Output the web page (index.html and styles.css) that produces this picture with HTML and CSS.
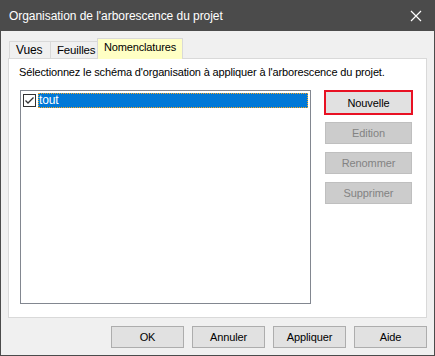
FILE: index.html
```html
<!DOCTYPE html>
<html lang="fr">
<head>
    <meta charset="UTF-8">
    <title>Organisation de l'arborescence du projet</title>
    <link rel="stylesheet" href="styles.css">
</head>
<body>
    <div class="window">
        <div class="titlebar">
            <span class="title">Organisation de l'arborescence du projet</span>
            <svg class="close" width="12" height="12" viewBox="0 0 12 12">
                <path d="M1 1 L11 11 M11 1 L1 11" stroke="#fff" stroke-width="1.2" fill="none"/>
            </svg>
        </div>

        <div class="content">
            <ul class="tabs">
                <li class="tab tab-vues">Vues</li>
                <li class="tab tab-feuilles">Feuilles</li>
                <li class="tab tab-nomenclatures active">Nomenclatures</li>
            </ul>

            <div class="panel">
                <p class="hint">Sélectionnez le schéma d'organisation à appliquer à l'arborescence du projet.</p>
                <div class="panel-body">
                    <div class="listbox">
                        <div class="list-item">
                            <span class="checkbox">
                                <svg width="13" height="13" viewBox="0 0 13 13">
                                    <path d="M2.5 6.5 L5 9 L10.5 3.5" stroke="#333" stroke-width="1.3" fill="none"/>
                                </svg>
                            </span>
                            <span class="item-label">tout</span>
                        </div>
                    </div>
                    <div class="side-buttons">
                        <button class="btn focus">Nouvelle</button>
                        <button class="btn" disabled>Edition</button>
                        <button class="btn" disabled>Renommer</button>
                        <button class="btn" disabled>Supprimer</button>
                    </div>
                </div>
            </div>

            <div class="footer">
                <button class="btn footer-btn">OK</button>
                <button class="btn footer-btn">Annuler</button>
                <button class="btn footer-btn">Appliquer</button>
                <button class="btn footer-btn">Aide</button>
            </div>
        </div>
    </div>
</body>
</html>
```

FILE: styles.css
```css
* {
    margin: 0;
    padding: 0;
    box-sizing: border-box;
}

body {
    font-family: 'Liberation Sans', Arial, sans-serif;
    font-size: 11px;
    letter-spacing: -0.15px;
    color: #000;
    background: #f0f0f0;
}

.window {
    width: 435px;
    height: 356px;
    border: 1px solid #4b4b4b;
    border-top: none;
    display: flex;
    flex-direction: column;
    background: #f0f0f0;
}

/* Title bar */
.titlebar {
    height: 31px;
    background: #4b4b4b;
    display: flex;
    align-items: center;
    justify-content: space-between;
    padding: 0 10px 0 9px;
    margin: 0 -1px;
}

.title {
    color: #fff;
    font-size: 12px;
    letter-spacing: -0.05px;
}

.close {
    margin-right: 3px;
}

/* Body */
.content {
    flex: 1;
    padding: 7px 7px 0 7px;
    display: flex;
    flex-direction: column;
}

.tabs {
    display: flex;
    list-style: none;
    align-items: flex-end;
    height: 20px;
    padding-left: 1px;
}

.tab {
    height: 17px;
    padding-left: 6px;
    border: 1px solid #d9d9d9;
    border-bottom: none;
    border-right: none;
    line-height: 16px;
    background: #f0f0f0;
}

.tab-vues {
    width: 41px;
    font-size: 12px;
}

.tab-feuilles {
    width: 47px;
    font-size: 11.5px;
}

.tab-nomenclatures {
    width: 86px;
}

.tab.active {
    height: 21px;
    margin-bottom: -1px;
    border-right: 1px solid #d9d9d9;
    background: #ffffc4;
    line-height: 16px;
    position: relative;
    z-index: 1;
}

.panel {
    height: 260px;
    border: 1px solid #d9d9d9;
    background: #fff;
    padding: 6px 11px 13px 10px;
    display: flex;
    flex-direction: column;
}

.hint {
    white-space: nowrap;
    line-height: 14px;
    margin-bottom: 11px;
}

.panel-body {
    flex: 1;
    display: flex;
    gap: 13px;
}

.listbox {
    width: 291px;
    margin-left: 1px;
    border: 1px solid #828790;
    background: #fff;
    padding: 2px;
}

.list-item {
    display: flex;
    align-items: center;
    height: 15px;
}

.checkbox {
    width: 13px;
    height: 13px;
    border: 1px solid #333;
    background: #fff;
    display: flex;
    align-items: center;
    justify-content: center;
    margin-right: 2px;
}

.checkbox svg {
    display: block;
    flex-shrink: 0;
}

.item-label {
    flex: 1;
    height: 15px;
    line-height: 13px;
    font-size: 12px;
    background: #0078d7;
    color: #fff;
    border: 1px dotted #f5a623;
}

.side-buttons {
    display: flex;
    flex-direction: column;
    gap: 8px;
}

.btn {
    font-family: inherit;
    font-size: 11px;
    letter-spacing: -0.1px;
    width: 87px;
    height: 22px;
    background: #e1e1e1;
    border: 1px solid #adadad;
    color: #000;
}

.btn.focus {
    height: 25px;
    width: 89px;
    border: 2px solid #e81123;
    margin-bottom: -1px;
}

.btn:disabled {
    background: #cccccc;
    border-color: #bfbfbf;
    color: #838383;
    margin-left: 1px;
}

.footer {
    display: flex;
    justify-content: flex-end;
    gap: 8px;
    padding-top: 8px;
}

.footer-btn {
    width: 73px;
}
```
